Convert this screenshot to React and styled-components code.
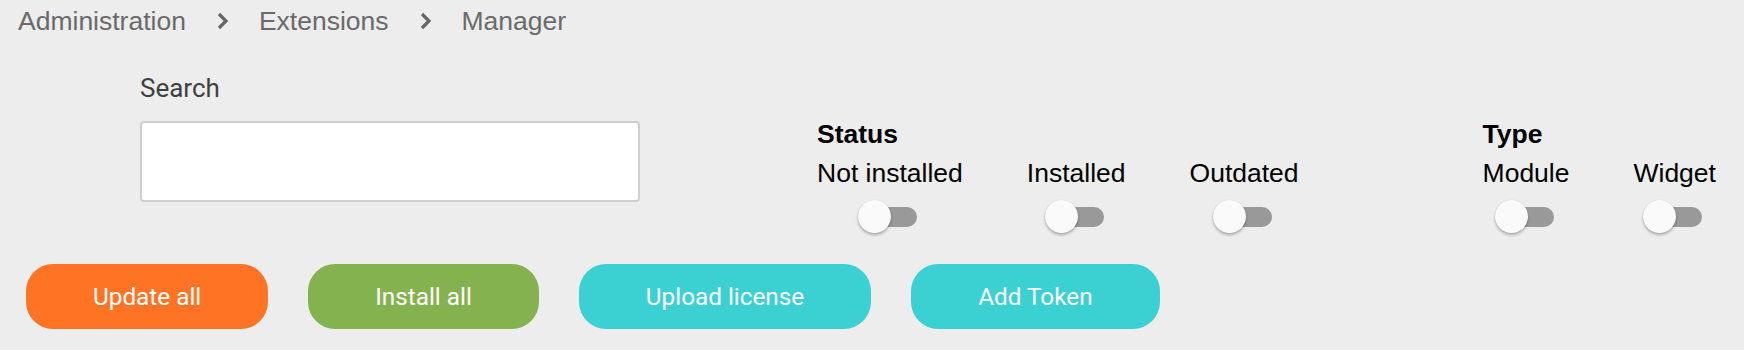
import React from "react";
import styled, { createGlobalStyle } from "styled-components";

const GlobalStyle = createGlobalStyle`
  html, body {
    margin: 0;
    padding: 0;
    background: #ededed;
  }
  * {
    box-sizing: border-box;
  }
`;

const Page = styled.div`
  width: 1744px;
  height: 350px;
  background: #ededed;
  padding-top: 6px;
  overflow: hidden;
`;

const Breadcrumbs = styled.nav`
  display: flex;
  align-items: center;
  gap: 31px;
  padding-left: 18px;
  height: 30px;
  font-family: "Liberation Sans", Arial, Helvetica, sans-serif;
  font-size: 26.5px;
  line-height: 30px;
  color: #6a6a6a;
`;

const Crumb = styled.span`
  white-space: nowrap;
`;

const Chevron = () => (
  <svg width="11" height="18" viewBox="0 0 11 18">
    <polyline
      points="2,2 9,9 2,16"
      fill="none"
      stroke="#666"
      strokeWidth="3.2"
    />
  </svg>
);

const Filters = styled.div`
  display: flex;
  align-items: flex-start;
  margin-top: 37px;
  padding-left: 140px;
`;

const SearchField = styled.div`
  display: flex;
  flex-direction: column;
  gap: 18px;
  width: 500px;
`;

const Label = styled.label`
  font-family: Roboto, "Liberation Sans", sans-serif;
  font-size: 26px;
  line-height: 30px;
  color: #3f3f3f;
`;

const Input = styled.input`
  width: 500px;
  height: 81px;
  background: #fff;
  border: 2px solid #cfcfcf;
  border-radius: 4px;
  outline: none;
  padding: 0 12px;
  font-size: 20px;
`;

const Group = styled.div`
  display: flex;
  flex-direction: column;
  margin-top: 46px;
  margin-left: ${(p) => p.$offset}px;
  font-family: "Liberation Sans", Arial, Helvetica, sans-serif;
  font-size: 26.5px;
  color: #000;
`;

const GroupTitle = styled.div`
  font-weight: bold;
  line-height: 30px;
`;

const Options = styled.div`
  display: flex;
  gap: 64px;
  margin-top: 9px;
`;

const Option = styled.div`
  display: flex;
  flex-direction: column;
  align-items: center;
  gap: 12px;
  line-height: 30px;
  white-space: nowrap;
`;

const Switch = styled.span`
  position: relative;
  display: flex;
  align-items: center;
  width: 59px;
  height: 33px;
  margin-right: 4px;
`;

const Track = styled.span`
  display: block;
  margin-left: 8px;
  width: 51px;
  height: 20px;
  border-radius: 10px;
  background: #999;
`;

const Knob = styled.span`
  position: absolute;
  left: 0;
  top: 0;
  width: 33px;
  height: 33px;
  border-radius: 50%;
  background: #fafafa;
  box-shadow: 0 2px 3px rgba(0, 0, 0, 0.28), 0 0 1px rgba(0, 0, 0, 0.12);
`;

const Actions = styled.div`
  display: flex;
  gap: 40px;
  margin-top: 31px;
  padding-left: 26px;
`;

const Button = styled.button`
  height: 65px;
  padding: 0 67px;
  border: none;
  border-radius: 27px;
  background: ${(p) => p.$color};
  color: #fff;
  font-family: Roboto, "Liberation Sans", sans-serif;
  font-size: 24.3px;
  cursor: pointer;
  white-space: nowrap;
`;

const Toggle = ({ label }) => (
  <Option>
    <span>{label}</span>
    <Switch>
      <Track />
      <Knob />
    </Switch>
  </Option>
);

const App = () => {
  return (
    <Page>
      <GlobalStyle />
      <Breadcrumbs>
        <Crumb>Administration</Crumb>
        <Chevron />
        <Crumb>Extensions</Crumb>
        <Chevron />
        <Crumb>Manager</Crumb>
      </Breadcrumbs>

      <Filters>
        <SearchField>
          <Label>Search</Label>
          <Input type="text" />
        </SearchField>

        <Group $offset={177}>
          <GroupTitle>Status</GroupTitle>
          <Options>
            <Toggle label="Not installed" />
            <Toggle label="Installed" />
            <Toggle label="Outdated" />
          </Options>
        </Group>

        <Group $offset={184}>
          <GroupTitle>Type</GroupTitle>
          <Options>
            <Toggle label="Module" />
            <Toggle label="Widget" />
          </Options>
        </Group>
      </Filters>

      <Actions>
        <Button $color="#ff7324">Update all</Button>
        <Button $color="#84b24e">Install all</Button>
        <Button $color="#3bd1d3">Upload license</Button>
        <Button $color="#3bd1d3">Add Token</Button>
      </Actions>
    </Page>
  );
};

export default App;
